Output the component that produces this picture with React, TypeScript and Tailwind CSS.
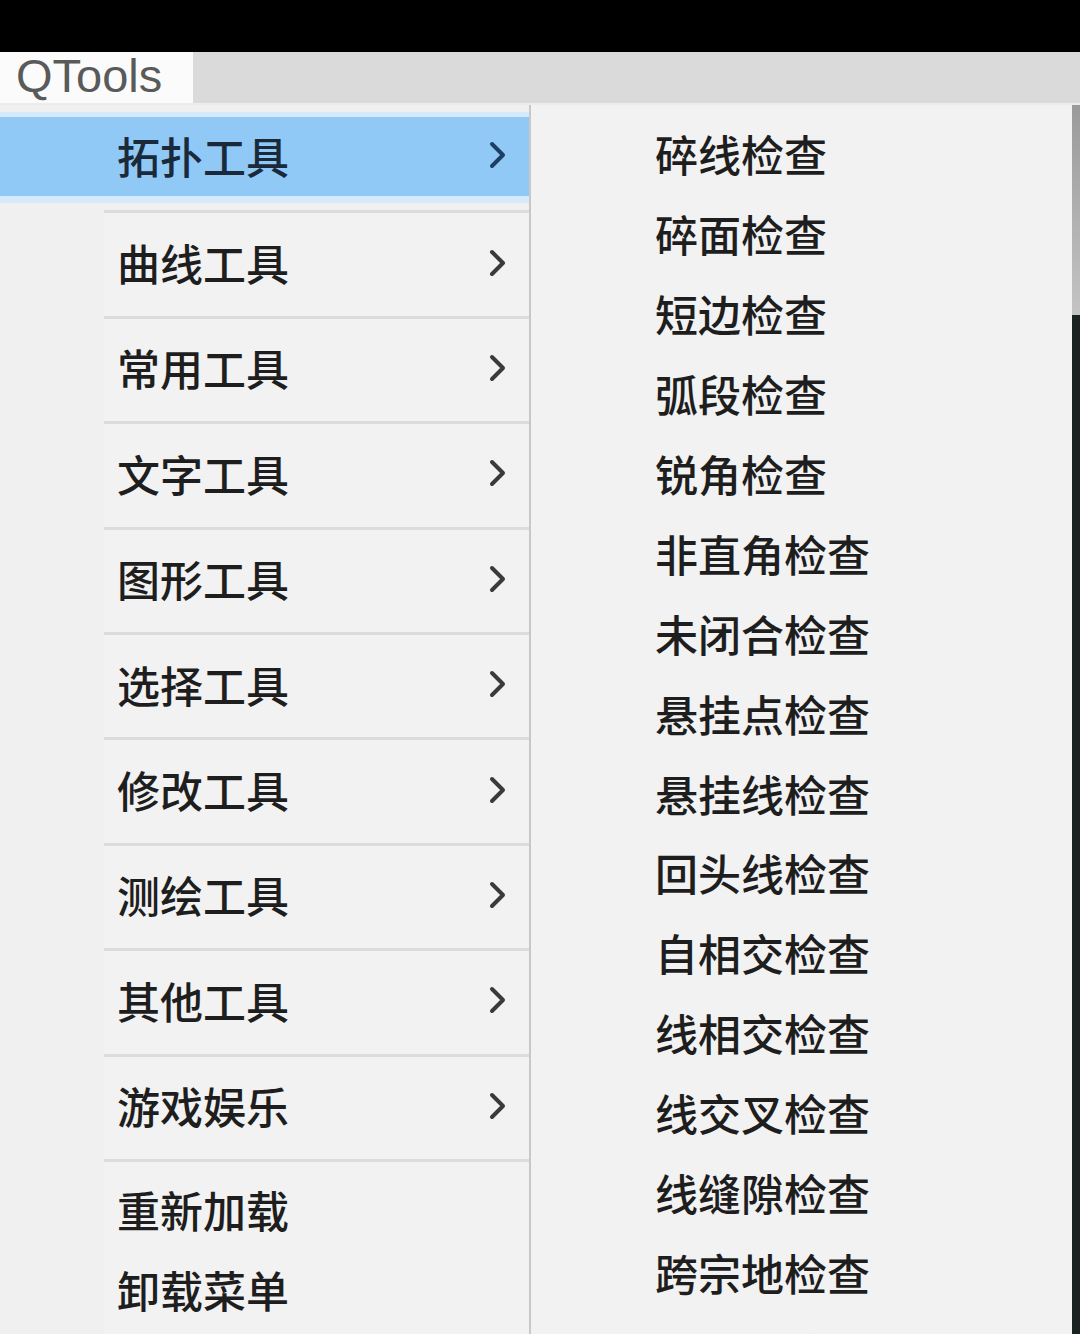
const tools = [
  "拓扑工具",
  "曲线工具",
  "常用工具",
  "文字工具",
  "图形工具",
  "选择工具",
  "修改工具",
  "测绘工具",
  "其他工具",
  "游戏娱乐",
];

const checks = [
  "碎线检查",
  "碎面检查",
  "短边检查",
  "弧段检查",
  "锐角检查",
  "非直角检查",
  "未闭合检查",
  "悬挂点检查",
  "悬挂线检查",
  "回头线检查",
  "自相交检查",
  "线相交检查",
  "线交叉检查",
  "线缝隙检查",
  "跨宗地检查",
  "面重叠检查",
];

const font = { fontFamily: '"Noto Sans CJK SC", "Noto Sans", sans-serif' };

function Chevron({ active }: { active?: boolean }) {
  return (
    <svg width="18" height="28" viewBox="0 0 18 28" className="shrink-0">
      <polyline
        points="3,3 14,14 3,25"
        fill="none"
        stroke={active ? "#1d3f63" : "#3a3a3a"}
        strokeWidth="4"
        strokeLinecap="round"
        strokeLinejoin="round"
      />
    </svg>
  );
}

export default function App() {
  return (
    <div className="flex h-[1334px] w-[1080px] flex-col overflow-hidden bg-black" style={font}>
      {/* black top strip */}
      <div className="h-[52px] shrink-0 bg-black" />

      {/* menu bar */}
      <div className="flex h-[51px] shrink-0 bg-[#dadada]">
        <div className="flex w-[193px] items-start bg-[#fbfbfb] pl-[16px]">
          <span className="font-['Liberation_Sans'] text-[47px] leading-none text-[#5a5a5a]">QTools</span>
        </div>
      </div>
      <div className="h-[2px] shrink-0 bg-[#ececec]" />

      <div className="flex flex-1 bg-[#f0f0f0]">
        {/* main menu */}
        <div className="flex w-[529px] shrink-0 flex-col bg-[#f0f0f0]">
          {tools.map((t, i) =>
            i === 0 ? (
              <div key={t} className="flex h-[105.4px] flex-col">
                <div className="mt-[7px] flex h-[91px] items-center border-t-[5px] border-b-[7px] border-[#d5ebfb] bg-[#90c8f6] pb-[3px] pl-[117px] pr-[22px]">
                  <span className="flex-1 text-[43px] font-medium leading-none text-[#1a2a3a]">{t}</span>
                  <Chevron active />
                </div>
              </div>
            ) : (
              <div key={t} className="ml-[104px] flex h-[105.4px] items-center border-t-[3px] border-[#dcdcdc] bg-[#f2f2f2] pb-[4px] pl-[13px] pr-[22px]">
                <span className="flex-1 text-[43px] font-medium leading-none text-[#1e1e1e]">{t}</span>
                <Chevron />
              </div>
            )
          )}
          <div className="ml-[104px] flex-1 border-t-[3px] border-[#dcdcdc] bg-[#f2f2f2] pt-[8px]">
            {["重新加载", "卸载菜单"].map((t) => (
              <div key={t} className="flex h-[80px] items-center pl-[13px]">
                <span className="text-[43px] font-medium leading-none text-[#1e1e1e]">{t}</span>
              </div>
            ))}
          </div>
        </div>

        {/* sub menu */}
        <div className="flex w-[543px] shrink-0 flex-col border-l-[2px] border-[#c8c8c8] bg-[#f2f2f2] pt-[9px]">
          {checks.map((c) => (
            <div key={c} className="flex h-[79.9px] shrink-0 items-center pl-[124px]">
              <span className="text-[43px] font-medium leading-none text-[#1e1e1e]">{c}</span>
            </div>
          ))}
        </div>

        {/* window behind */}
        <div className="flex flex-1 flex-col">
          <div className="h-[210px] bg-gradient-to-b from-[#9a9a9a] to-[#c4c4c4]" />
          <div className="flex-1 bg-[#1b2222]" />
        </div>
      </div>
    </div>
  );
}
